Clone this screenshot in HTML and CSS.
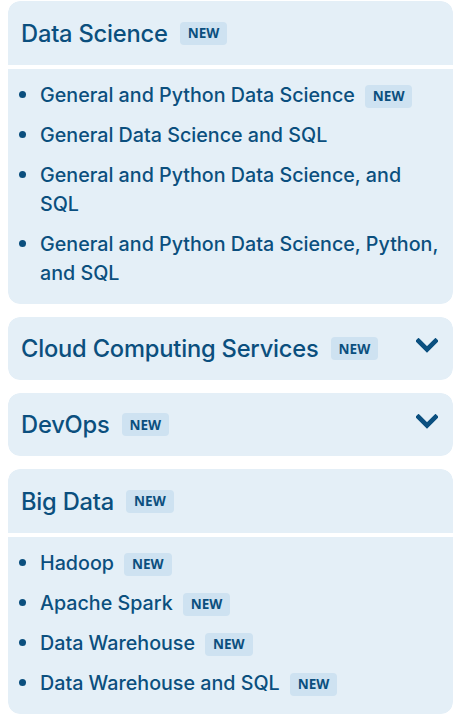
FILE: index.html
```html
<!DOCTYPE html>
<html>
<head>
<meta charset="utf-8">
<link rel="stylesheet" href="styles.css">
</head>
<body>
<div class="cards">
  <section class="card open">
    <div class="card-head">
      <h2 class="title">Data Science</h2><span class="badge">NEW</span>
    </div>
    <ul class="items">
      <li><span>General and Python Data Science</span><span class="badge">NEW</span></li>
      <li><span>General Data Science and SQL</span></li>
      <li><span>General and Python Data Science, and SQL</span></li>
      <li><span>General and Python Data Science, Python, and SQL</span></li>
    </ul>
  </section>
  <section class="card">
    <div class="card-head">
      <h2 class="title">Cloud Computing Services</h2><span class="badge">NEW</span>
      <svg class="chev" viewBox="0 0 22 15" width="22" height="15"><path d="M2.5 3 L11 11.5 L19.5 3" fill="none" stroke="#0b5080" stroke-width="4.6" stroke-linecap="square"/></svg>
    </div>
  </section>
  <section class="card">
    <div class="card-head">
      <h2 class="title">DevOps</h2><span class="badge">NEW</span>
      <svg class="chev" viewBox="0 0 22 15" width="22" height="15"><path d="M2.5 3 L11 11.5 L19.5 3" fill="none" stroke="#0b5080" stroke-width="4.6" stroke-linecap="square"/></svg>
    </div>
  </section>
  <section class="card open">
    <div class="card-head">
      <h2 class="title">Big Data</h2><span class="badge">NEW</span>
    </div>
    <ul class="items">
      <li><span>Hadoop</span><span class="badge">NEW</span></li>
      <li><span>Apache Spark</span><span class="badge">NEW</span></li>
      <li><span>Data Warehouse</span><span class="badge">NEW</span></li>
      <li><span>Data Warehouse and SQL</span><span class="badge">NEW</span></li>
    </ul>
  </section>
</div>
</body>
</html>
```
FILE: styles.css
```css
html, body {
  margin: 0;
  background: #ffffff;
}
body {
  padding: 1px 12px 0 8px;
  font-family: "Inter", "Noto Sans", sans-serif;
  color: #0b4f7e;
}
.cards {
  display: flex;
  flex-direction: column;
  gap: 13px;
}
.card {
  display: flex;
  flex-direction: column;
  gap: 4px;
  border-radius: 12px;
  overflow: hidden;
  background: #ffffff;
}
.card-head {
  display: flex;
  align-items: center;
  height: 64px;
  padding: 0 15px 0 13px;
  background: #e4eff7;
  border-radius: 12px;
}
.card.open .card-head {
  border-radius: 12px 12px 0 0;
}
.card:not(.open) .card-head {
  height: 63px;
}
.title {
  margin: 0;
  font-size: 23.7px;
  font-weight: 500;
  letter-spacing: -0.2px;
}
.badge {
  display: inline-flex;
  align-items: center;
  justify-content: center;
  height: 23px;
  padding: 0 8px;
  margin-left: 12px;
  border-radius: 4px;
  background: #cee2f1;
  font-family: "Open Sans", "Noto Sans", sans-serif;
  font-weight: 700;
  font-size: 13.5px;
  color: #0b4f7e;
}
.chev {
  margin-left: auto;
  align-self: flex-start;
  margin-top: 21px;
}
.items {
  margin: 0;
  padding: 12px 12px 16px 32px;
  background: #e4eff7;
  border-radius: 0 0 12px 12px;
  list-style: none;
  display: flex;
  flex-direction: column;
  gap: 11px;
}
.items li {
  position: relative;
  font-size: 19.7px;
  font-weight: 500;
  line-height: 29px;
  padding-right: 1px;
}
.items li::before {
  content: "";
  position: absolute;
  left: -21px;
  top: 10px;
  width: 7px;
  height: 7px;
  border-radius: 50%;
  background: #0b4f7e;
}
.items li .badge {
  margin-left: 10px;
  vertical-align: 1px;
}
```
